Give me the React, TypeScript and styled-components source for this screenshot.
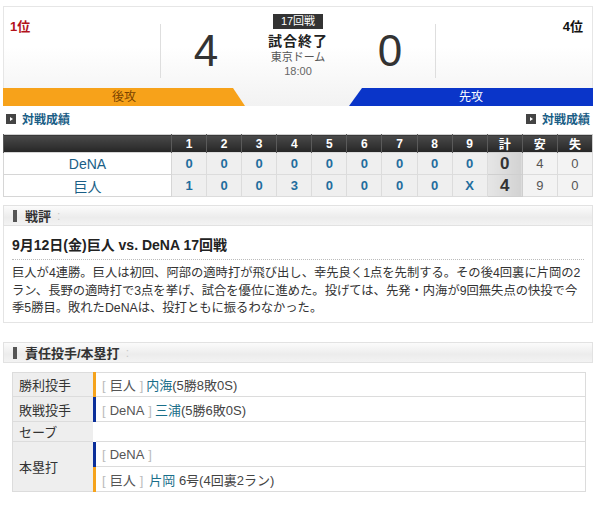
import React from "react";
import styled, { createGlobalStyle } from "styled-components";

const GlobalStyle = createGlobalStyle`
  body {
    margin: 0;
    background: #fff;
    font-family: "Liberation Sans", "Noto Sans CJK JP", sans-serif;
    color: #333;
  }
`;

type Side = "home" | "away";

const innings = ["1", "2", "3", "4", "5", "6", "7", "8", "9"];

const lines = [
  { team: "DeNA", runs: ["0", "0", "0", "0", "0", "0", "0", "0", "0"], total: "0", hits: "4", errors: "0" },
  { team: "巨人", runs: ["1", "0", "0", "3", "0", "0", "0", "0", "X"], total: "4", hits: "9", errors: "0" },
];

const App: React.FC = () => {
  return (
    <Page>
      <GlobalStyle />

      {/* スコアヘッダー */}
      <Header>
        <TopRow>
          <TeamSide align="left">
            <Rank color="#b3121b">1位</Rank>
          </TeamSide>
          <Divider />
          <Score>4</Score>
          <Info>
            <RoundBadge>17回戦</RoundBadge>
            <Status>試合終了</Status>
            <Sub>東京ドーム</Sub>
            <Time>18:00</Time>
          </Info>
          <Score>0</Score>
          <Divider />
          <TeamSide align="right">
            <Rank color="#111">4位</Rank>
          </TeamSide>
        </TopRow>
        <BarRow>
          <AttackBar side="home">後攻</AttackBar>
          <AttackBar side="away">先攻</AttackBar>
        </BarRow>
      </Header>

      <LinkRow>
        <RecordLink>
          <PlayIcon />
          対戦成績
        </RecordLink>
        <RecordLink>
          <PlayIcon />
          対戦成績
        </RecordLink>
      </LinkRow>

      {/* スコアボード */}
      <Board>
        <thead>
          <tr>
            <HeadCell style={{ width: 167 }} />
            {innings.map((n) => (
              <HeadCell key={n}>{n}</HeadCell>
            ))}
            <HeadCell>計</HeadCell>
            <HeadCell>安</HeadCell>
            <HeadCell>失</HeadCell>
          </tr>
        </thead>
        <tbody>
          {lines.map((line) => (
            <tr key={line.team}>
              <TeamCell>{line.team}</TeamCell>
              {line.runs.map((r, i) => (
                <RunCell key={i}>{r}</RunCell>
              ))}
              <TotalCell>{line.total}</TotalCell>
              <StatCell>{line.hits}</StatCell>
              <StatCell>{line.errors}</StatCell>
            </tr>
          ))}
        </tbody>
      </Board>

      {/* 戦評 */}
      <SectionHead>
        <Marker />
        <SectionTitle>戦評</SectionTitle>
        <Dots>:</Dots>
      </SectionHead>
      <ReviewBox>
        <ReviewTitle>9月12日(金)巨人 vs. DeNA 17回戦</ReviewTitle>
        <ReviewText>
          巨人が4連勝。巨人は初回、阿部の適時打が飛び出し、幸先良く1点を先制する。その後4回裏に片岡の2
          <br />
          ラン、長野の適時打で3点を挙げ、試合を優位に進めた。投げては、先発・内海が9回無失点の快投で今
          <br />
          季5勝目。敗れたDeNAは、投打ともに振るわなかった。
        </ReviewText>
      </ReviewBox>

      {/* 責任投手/本塁打 */}
      <SectionHead style={{ marginTop: 19 }}>
        <Marker />
        <SectionTitle>責任投手/本塁打</SectionTitle>
        <Dots>:</Dots>
      </SectionHead>
      <PitcherTable>
        <tbody>
          <tr>
            <Label>勝利投手</Label>
            <Value side="home" h={23}>
              <Team>巨人</Team>
              <Player>内海</Player>
              <Note>(5勝8敗0S)</Note>
            </Value>
          </tr>
          <tr>
            <Label>敗戦投手</Label>
            <Value side="away" h={24}>
              <Team>DeNA</Team>
              <Player>三浦</Player>
              <Note>(5勝6敗0S)</Note>
            </Value>
          </tr>
          <tr>
            <Label>セーブ</Label>
            <Value h={19} />
          </tr>
          <tr>
            <Label rowSpan={2}>本塁打</Label>
            <Value side="away" h={24}>
              <Team>DeNA</Team>
            </Value>
          </tr>
          <tr>
            <Value side="home" h={24}>
              <Team>巨人</Team>
              <Player style={{ marginLeft: 6 }}>片岡</Player>
              <Note> 6号(4回裏2ラン)</Note>
            </Value>
          </tr>
        </tbody>
      </PitcherTable>
    </Page>
  );
};

export default App;

const Page = styled.div`
  width: 590px;
  padding: 6px 7px 0 3px;
`;

const Header = styled.div`
  height: 100px;
  box-sizing: border-box;
  border: 1px solid #e6e6e6;
  border-bottom: none;
  background: linear-gradient(#fff 40%, #f2f2f2);
  display: flex;
  flex-direction: column;
`;

const TopRow = styled.div`
  height: 81px;
  display: flex;
  align-items: stretch;
`;

const TeamSide = styled.div<{ align: "left" | "right" }>`
  flex: 0 0 156px;
  box-sizing: border-box;
  padding: 9px 9px 0 6px;
  text-align: ${({ align }) => align};
`;

const Rank = styled.div<{ color: string }>`
  color: ${({ color }) => color};
  font-size: 13px;
  font-weight: 700;
`;

const Divider = styled.div`
  width: 1px;
  height: 54px;
  margin-top: 17px;
  background: #dedede;
`;

const Score = styled.div`
  flex: 0 0 90px;
  text-align: center;
  font-size: 44px;
  line-height: 1;
  padding-top: 22px;
  color: #333;
`;

const Info = styled.div`
  flex: 0 0 94px;
  display: flex;
  flex-direction: column;
  align-items: center;
  padding-top: 7px;
`;

const RoundBadge = styled.div`
  background: #333;
  color: #fff;
  font-size: 11px;
  line-height: 15px;
  padding: 0 8px;
`;

const Status = styled.div`
  font-size: 14px;
  font-weight: 700;
  line-height: 16px;
  margin-top: 4px;
  color: #222;
  letter-spacing: 1px;
`;

const Sub = styled.div`
  font-size: 11px;
  line-height: 14px;
  color: #555;
  margin-top: 1px;
`;

const Time = styled.div`
  font-size: 11px;
  line-height: 14px;
  color: #666;
`;

const BarRow = styled.div`
  height: 18px;
  display: flex;
  justify-content: space-between;
`;

const AttackBar = styled.div<{ side: Side }>`
  width: ${({ side }) => (side === "home" ? "242px" : "244px")};
  height: 18px;
  margin: ${({ side }) => (side === "home" ? "0 0 0 -1px" : "0 -1px 0 0")};
  font-size: 12px;
  line-height: 18px;
  text-align: center;
  background: ${({ side }) => (side === "home" ? "#f7a21a" : "#0a35c9")};
  color: ${({ side }) => (side === "home" ? "#7a4300" : "#fff")};
  clip-path: ${({ side }) =>
    side === "home"
      ? "polygon(0 0, calc(100% - 12px) 0, 100% 100%, 0 100%)"
      : "polygon(13px 0, 100% 0, 100% 100%, 0 100%)"};
`;

const LinkRow = styled.div`
  display: flex;
  justify-content: space-between;
  padding: 3px 3px 0 3px;
  height: 19px;
`;

const RecordLink = styled.a`
  display: flex;
  align-items: center;
  gap: 6px;
  color: #1a5e86;
  font-size: 12px;
  font-weight: 700;
  text-decoration: none;
`;

const PlayIcon = styled.span`
  width: 10px;
  height: 10px;
  background: #444;
  position: relative;
  &::after {
    content: "";
    position: absolute;
    left: 4px;
    top: 3px;
    border-left: 3px solid #fff;
    border-top: 2px solid transparent;
    border-bottom: 2px solid transparent;
  }
`;

const Board = styled.table`
  width: 590px;
  margin-top: 6px;
  border-collapse: collapse;
  table-layout: fixed;
  border: 1px solid #cfcfcf;
`;

const HeadCell = styled.th`
  height: 17px;
  padding: 0;
  background: linear-gradient(#4a4a4a, #262626);
  color: #fff;
  font-size: 12px;
  font-weight: 700;
  text-align: center;
  border-left: 1px solid #5a5a5a;
`;

const TeamCell = styled.td`
  height: 21px;
  padding: 0;
  text-align: center;
  color: #1a5e86;
  font-size: 14px;
  background: #fff;
  border: 1px solid #d6d6d6;
`;

const RunCell = styled.td`
  padding: 0;
  text-align: center;
  color: #1f6d9e;
  font-weight: 700;
  font-size: 13px;
  background: #efefef;
  border: 1px solid #dcdcdc;
`;

const TotalCell = styled.td`
  padding: 0;
  text-align: center;
  color: #333;
  font-weight: 700;
  font-size: 17px;
  background: linear-gradient(90deg, #e6e6e6, #d2d2d2);
  border: 1px solid #cfcfcf;
`;

const StatCell = styled.td`
  padding: 0;
  text-align: center;
  color: #555;
  font-size: 13px;
  background: #f3f3f3;
  border: 1px solid #dcdcdc;
`;

const SectionHead = styled.div`
  margin-top: 8px;
  height: 21px;
  box-sizing: border-box;
  border: 1px solid #e2e2e2;
  background: linear-gradient(#fbfbfb, #ececec 60%, #f3f3f3);
  display: flex;
  align-items: center;
  padding-left: 9px;
`;

const Marker = styled.span`
  width: 4px;
  height: 12px;
  background: #555;
  margin-right: 8px;
`;

const SectionTitle = styled.span`
  font-size: 13px;
  font-weight: 700;
  color: #333;
`;

const Dots = styled.span`
  color: #c8c8c8;
  font-size: 12px;
  margin-left: 6px;
`;

const ReviewBox = styled.div`
  border: 1px solid #e4e4e4;
  border-top: none;
  padding: 8px 6px 8px 8px;
  height: 97px;
  box-sizing: border-box;
`;

const ReviewTitle = styled.div`
  font-size: 14px;
  font-weight: 700;
  color: #222;
  padding-bottom: 5px;
  border-bottom: 1px dotted #bbb;
  margin-right: 2px;
`;

const ReviewText = styled.p`
  margin: 5px 0 0;
  font-size: 12.3px;
  line-height: 17.5px;
  color: #333;
  white-space: nowrap;
`;

const PitcherTable = styled.table`
  width: 574px;
  margin: 9px 0 0 9px;
  border-collapse: collapse;
  border: 1px solid #dcdcdc;
`;

const Label = styled.td`
  width: 74px;
  padding: 0 0 0 6px;
  background: #eeeeee;
  color: #333;
  font-size: 13px;
  border-bottom: 1px solid #dcdcdc;
  vertical-align: middle;
`;

const Value = styled.td<{ side?: Side; h: number }>`
  height: ${({ h }) => h}px;
  padding: 0 0 0 6px;
  font-size: 13px;
  color: #444;
  border-bottom: 1px solid #dcdcdc;
  border-left: 3px solid
    ${({ side }) =>
      side === "home" ? "#f5a31c" : side === "away" ? "#0b2f9a" : "#fff"};
`;

const Team = styled.span`
  color: #555;
  &::before {
    content: "[";
    color: #bbb;
    margin-right: 4px;
  }
  &::after {
    content: "]";
    color: #bbb;
    margin-left: 4px;
  }
`;

const Player = styled.span`
  color: #1a6f8a;
  margin-left: 3px;
`;

const Note = styled.span`
  color: #444;
`;
